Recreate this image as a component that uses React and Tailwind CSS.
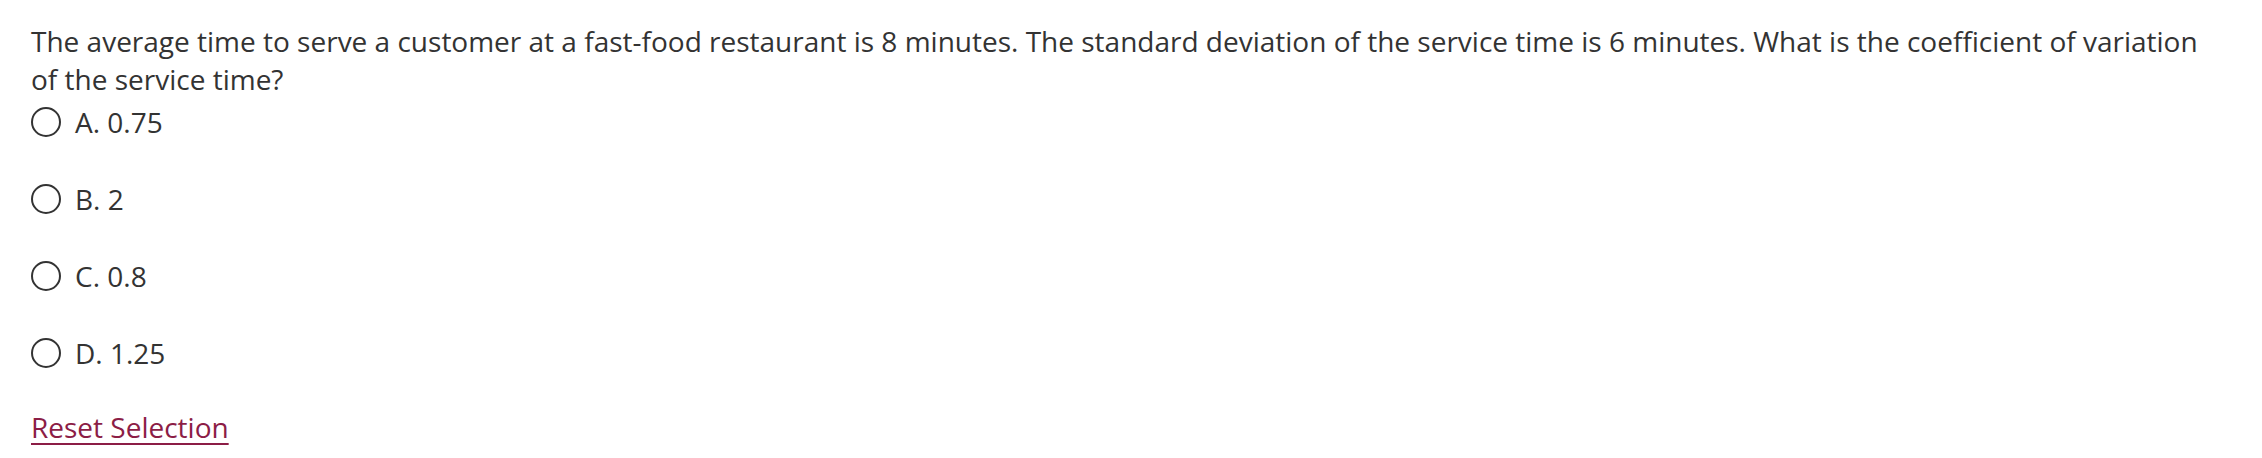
import React, { useState } from "react";

const opcoes = [
    { id: "a", label: "A. 0.75" },
    { id: "b", label: "B. 2" },
    { id: "c", label: "C. 0.8" },
    { id: "d", label: "D. 1.25" },
];

function App() {
    const [selecionado, setSelecionado] = useState("");

    return (
        <div className="min-h-screen bg-white pl-[31px] pr-[40px] pt-[22px] text-[#333333] font-['Open_Sans',sans-serif] text-[28px] leading-[38px]">
            <p>
                The average time to serve a customer at a fast-food restaurant is 8 minutes. The standard deviation of the service time is 6 minutes. What is the coefficient of variation of the service time?
            </p>

            <div className="mt-[5px] flex flex-col gap-[39px]">
                {opcoes.map((op) => (
                    <label key={op.id} className="flex h-[38px] items-center cursor-pointer">
                        <span className="flex h-[30px] w-[30px] shrink-0 items-center justify-center rounded-full border-2 border-[#333333] bg-white">
                            {selecionado === op.id && <span className="h-[16px] w-[16px] rounded-full bg-[#333333]" />}
                        </span>
                        <input
                            type="radio"
                            name="resposta"
                            className="hidden"
                            checked={selecionado === op.id}
                            onChange={() => setSelecionado(op.id)}
                        />
                        <span className="ml-[14px]">{op.label}</span>
                    </label>
                ))}
            </div>

            <button
                type="button"
                onClick={() => setSelecionado("")}
                className="mt-[36px] block text-[#8c1d46] underline decoration-2 underline-offset-[5px]"
            >
                Reset Selection
            </button>
        </div>
    );
}

export default App;
